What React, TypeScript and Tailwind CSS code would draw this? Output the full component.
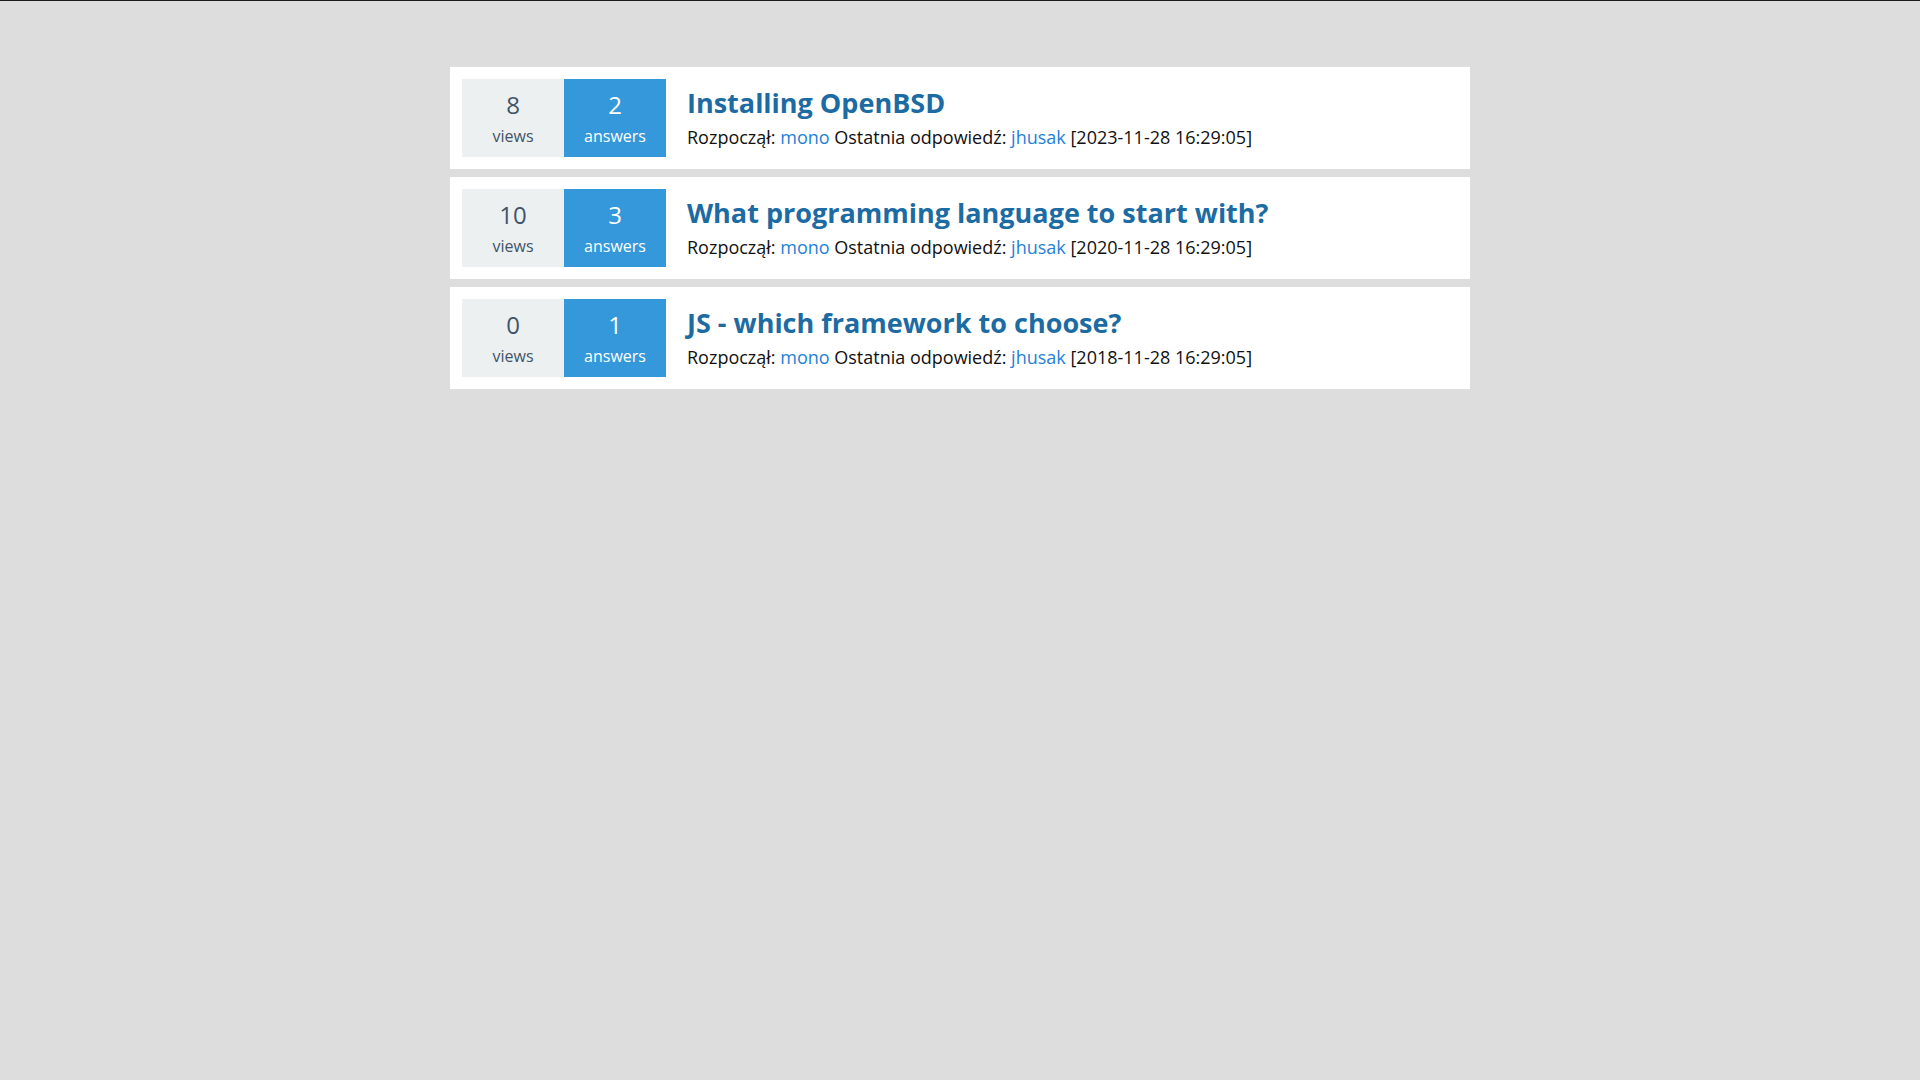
type Topic = {
  id: number
  title: string
  views: number
  answers: number
  author: string
  lastBy: string
  date: string
}

const topics: Topic[] = [
  { id: 1, title: "Installing OpenBSD", views: 8, answers: 2, author: "mono", lastBy: "jhusak", date: "2023-11-28 16:29:05" },
  { id: 2, title: "What programming language to start with?", views: 10, answers: 3, author: "mono", lastBy: "jhusak", date: "2020-11-28 16:29:05" },
  { id: 3, title: "JS - which framework to choose?", views: 0, answers: 1, author: "mono", lastBy: "jhusak", date: "2018-11-28 16:29:05" },
]

function StatBox({ value, label, active }: { value: number; label: string; active?: boolean }) {
  return (
    <div
      className={
        active
          ? "w-[102px] h-[78px] flex flex-col items-center pt-[11px] bg-[#3498db] text-white"
          : "w-[102px] h-[78px] flex flex-col items-center pt-[11px] bg-[#ecf0f1] text-[#3f5468]"
      }
    >
      <span className="text-[24px] leading-[30px]">{value}</span>
      <span className="text-[16px] leading-[20px] mt-[6px]">{label}</span>
    </div>
  )
}

export default function App() {
  return (
    <div className="min-h-screen bg-[#dddddd] border-t border-[#1a1a1a] font-['Open_Sans',sans-serif]">
      <div className="mx-auto w-[1020px] pt-[66px] flex flex-col gap-2">
        {topics.map((topic) => (
          <div key={topic.id} className="bg-white p-3 flex items-start">
            <StatBox value={topic.views} label="views" />
            <StatBox value={topic.answers} label="answers" active />
            <div className="ml-[21px] flex flex-col">
              <a href="#" className="mt-[6px] text-[27px] leading-[36px] font-bold text-[#1c6ba3]">
                {topic.title}
              </a>
              <p className="mt-[4px] text-[18px] leading-[24px] text-[#111111]">
                Rozpoczął: <a href="#" className="text-[#1f7fd8]">{topic.author}</a> Ostatnia odpowiedź:{" "}
                <a href="#" className="text-[#1f7fd8]">{topic.lastBy}</a> [{topic.date}]
              </p>
            </div>
          </div>
        ))}
      </div>
    </div>
  )
}
